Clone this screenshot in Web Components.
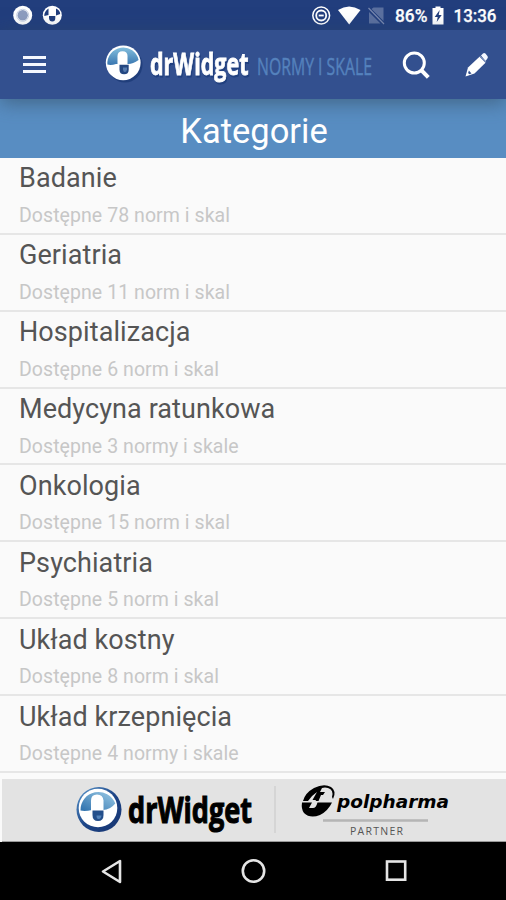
<!DOCTYPE html>
<html lang="pl"><head><meta charset="utf-8"><title>drWidget</title>
<style>html,body{margin:0;height:100%;background:#fafafa}body{font-family:Roboto,"Noto Sans",sans-serif}</style></head>
<body><norm-app></norm-app>
<script>
const define=(name,html)=>customElements.define(name,class extends HTMLElement{
 constructor(){super();this.attachShadow({mode:'open'})}
 connectedCallback(){this.shadowRoot.innerHTML=typeof html==='function'?html(this):html}
});

define('pill-logo',`<style>:host{display:block;width:46px;height:47px}svg{display:block;width:100%;height:100%;overflow:visible}</style>
<svg viewBox="0 0 46 46"><defs>
<linearGradient id="r" x1="0" y1="0" x2="1" y2="1"><stop offset="0" stop-color="#5d9bd0"/><stop offset=".5" stop-color="#1d4587"/><stop offset="1" stop-color="#17346f"/></linearGradient>
<linearGradient id="b" x1="0" y1="1" x2="1" y2="0"><stop offset="0" stop-color="#2d70ac"/><stop offset="1" stop-color="#9ccbe6"/></linearGradient></defs>
<circle cx="23" cy="23" r="22.5" fill="url(#r)"/><circle cx="22" cy="21.5" r="19.3" fill="#fff"/>
<path d="M4.5 24A18 18 0 0 1 39.3 17Q34 23.5 27 23.5H16Q9 25 4.5 24Z" fill="url(#b)"/>
<path d="M15 24.5V14Q15 8 21 8T27.5 14V24.5Z" fill="#fff"/><path d="M16.5 24H27.5V28.5Q27.5 34.5 22 34.5T16.5 28.5Z" fill="#244f8b"/><path d="M20.5 29h5q-.5 3.5-3 3.5-2 0-2-3.5" fill="#5383ba"/></svg>`);

define('status-bar',`<style>:host{display:flex;height:30px;background:#223e7d}svg{display:block}text{font:500 18px Roboto,sans-serif;fill:#fff;stroke:#fff;stroke-width:.25}</style>
<svg width="506" height="30" viewBox="0 0 506 30"><circle cx="22.7" cy="15.3" r="9.5" fill="#fff"/><circle cx="22.7" cy="15.3" r="5.2" fill="#8d9dbf"/><circle cx="22.7" cy="15.3" r="6" fill="none" stroke="#c8d2e4"/>
<circle cx="52.3" cy="15.3" r="9.5" fill="#fff"/><path d="M44.3 16q0-5 4.2-7.5V15ZM56 8.6q4 2 4.2 5.3L56 15.5ZM49 16h6.3v2q0 3.5-3 3.5T49 18Z" fill="#203d7c"/>
<g fill="none" stroke="#fff"><circle cx="321.2" cy="15.5" r="8.4" stroke-width="1.5"/><circle cx="321.2" cy="15.5" r="5" stroke-width="1.8"/><path d="M318.7 15.5h5" stroke-width="1.8"/></g>
<path d="M338 10q11-7 22.5 0L349.2 24.5Z" fill="#fff"/>
<path d="M383.5 7.5V21L371.5 9l2-1.5ZM369 12l11.5 11.5H369Z" fill="#5b709f"/><path d="M368.5 8L384 24" stroke="#7888af" stroke-width="1.2"/>
<text x="395" y="22" textLength="32.5" lengthAdjust="spacingAndGlyphs">86%</text>
<path d="M435.5 6.5h5V8h3v16.5h-11V8h3Z" fill="#fff"/><path d="M439.7 10l-5 7h3l-1 5 5-7h-3Z" fill="#223e7d"/>
<text x="453.5" y="22" textLength="43" lengthAdjust="spacingAndGlyphs">13:36</text></svg>`);

define('tool-bar',`<style>:host{display:flex;align-items:center;height:69px;background:#33508f;position:relative;z-index:1;box-shadow:0 4px 18px rgba(50,75,95,.6)}
.menu{display:grid;gap:4px;width:23px;margin-left:23px;margin-right:59px}.menu i{height:3px;background:#f5f8ff}
svg{display:block;flex:none;overflow:visible}.word{font-family:"Open Sans",sans-serif}.name{filter:drop-shadow(1.5px 2px .5px #203f7e)}</style>
<div class="menu"><i></i><i></i><i></i></div>
<svg width="36" height="40" viewBox="0 0 36 40" style="margin-right:9px"><defs><linearGradient id="g" x1="0" y1="0" x2="0" y2="1"><stop offset="0" stop-color="#83bfdd"/><stop offset="1" stop-color="#3976b0"/></linearGradient></defs><circle cx="20" cy="20" r="17.5" fill="#203e7b"/><circle cx="18.2" cy="17.8" r="17.4" fill="#fff"/><path d="M2.4 19.5A15.8 15.8 0 0 1 33.6 15Q28 19 23 19H11Q6 20.5 2.4 19.5Z" fill="url(#g)"/><path d="M12.5 20v-9q0-4.8 5-4.8t5 4.8v9Z" fill="#fff"/><path d="M14.5 19.8h9.2v5q0 4.5-4.6 4.5t-4.6-4.5Z" fill="#244781"/><path d="M18 22.5h4v2q-.5 2.5-2.1 2.5T18 24.5Z" fill="#557bae"/></svg>
<svg class="word" width="106" height="60"><text class="name" x="0" y="39.5" fill="#fff" stroke="#fff" stroke-width=".8" font-weight="700" font-size="29.5" textLength="98.5" lengthAdjust="spacingAndGlyphs">drWidget</text></svg><svg class="word" width="120" height="60" style="margin-right:26px"><text x="1" y="39.5" fill="#5582bd" stroke="#5582bd" stroke-width=".4" font-size="23" textLength="115" lengthAdjust="spacingAndGlyphs">NORMY I SKALE</text></svg>
<svg width="28" height="30" viewBox="0 0 28 30" style="margin-right:35px"><circle cx="12.3" cy="13" r="10" fill="none" stroke="#fff" stroke-width="3"/><path d="M19.5 20.3L26.3 27.3" stroke="#fff" stroke-width="4"/></svg>
<svg width="24" height="26" viewBox="0 0 24 26"><path d="M.5 24.5l2.5-9L14.5 4.7l6 6L9.5 21.5Z" fill="#fff"/><path d="M16 3.5l2-2q1.2-1 2.4.1l2 2.5q1 1.2 0 2.3L20.5 9Z" fill="#f5f8ff"/><path d="M3.9 18.5l2.6 3-2.3.7-1.1-1.1Z" fill="#33508f"/><path d="M14.8 4.2l6 6" stroke="#8296c0" stroke-width="1.2"/></svg>`);

define('page-title',`<style>:host{display:flex;height:58.6px;align-items:center;justify-content:center;background:#588dc2;color:#fff;font-size:34.5px;padding:4.5px 0 0 2px;box-sizing:border-box}</style><slot></slot>`);

define('category-row',e=>`<style>:host{display:flex;flex-direction:column;height:76.9px;box-sizing:border-box;padding:2.6px 19px 0;border-bottom:2px solid #e6e6e6;white-space:nowrap}
.t{font-size:27px;line-height:36px;color:#555;letter-spacing:.08px}.s{font-size:19.5px;line-height:24px;margin-top:7.4px;color:#c7c7c7;letter-spacing:.06px}</style><span class="t"><slot></slot></span><span class="s">${e.getAttribute('note')}</span>`);

define('partner-footer',`<style>:host{display:flex;height:62px;margin:5.7px 0 0 2px;background:#e3e3e3;border-bottom:1px solid #999;align-items:center;box-sizing:content-box}
pill-logo{margin-left:74px;margin-right:5px}.sep{width:2px;height:47px;background:#d5d5d5;margin:0 25px 0 19px}svg{display:block;flex:none;overflow:visible}</style>
<pill-logo></pill-logo><svg width="128" height="62"><text x="1" y="44" font-family="Open Sans,sans-serif" font-weight="700" font-size="36" stroke="#000" stroke-width="1.1" textLength="124" lengthAdjust="spacingAndGlyphs">drWidget</text></svg><div class="sep"></div>
<svg width="152" height="62" viewBox="-1 -2 152 62"><path d="M1 20Q3 12 12 7Q22 2 29 6Q35 10 31 18L30 16Q32 9 26 7Q23 6 20 7L14 19H10.5L15 11Q9 15 6 20Z M0 21.5H10L7 27H11Q14 27 15.5 21.5H30Q26 30 18 34Q8 38 2 32Q-1 28 0 21.5Z M18 11H23L21 14H19L16.5 20H13.5Z"/>
<text x="35" y="27" font-family="DejaVu Sans,sans-serif" font-size="18.5" font-weight="700" font-style="italic" textLength="112" lengthAdjust="spacingAndGlyphs">polpharma</text><path d="M21 39.5H126" stroke="#b5b5b5" stroke-width="2.5"/><text x="48" y="54" fill="#555" font-family="Open Sans,sans-serif" font-size="10.5" textLength="53" lengthAdjust="spacing">PARTNER</text></svg>`);

define('nav-bar',`<style>:host{display:flex;height:59px;background:#000}svg{display:block}</style><svg width="506" height="58" viewBox="0 0 506 58" fill="none" stroke="#e5e5e5" stroke-width="2.6"><path d="M120 19V40L103 29.5Z" stroke-linejoin="round"/><circle cx="253.5" cy="29" r="10.7"/><rect x="387" y="19.5" width="18.2" height="18.2"/></svg>`);

define('norm-app',`<style>:host{display:flex;flex-direction:column;width:506px;height:900px;overflow:hidden;background:#fafafa}main{height:615.7px;flex:none}main category-row:first-child{height:77.2px;padding-top:2.9px}status-bar,tool-bar,page-title,partner-footer,nav-bar{flex:none}</style>
<status-bar></status-bar><tool-bar></tool-bar><page-title>Kategorie</page-title><main>
<category-row note="Dostępne 78 norm i skal">Badanie</category-row><category-row note="Dostępne 11 norm i skal">Geriatria</category-row><category-row note="Dostępne 6 norm i skal">Hospitalizacja</category-row><category-row note="Dostępne 3 normy i skale">Medycyna ratunkowa</category-row><category-row note="Dostępne 15 norm i skal">Onkologia</category-row><category-row note="Dostępne 5 norm i skal">Psychiatria</category-row><category-row note="Dostępne 8 norm i skal">Układ kostny</category-row><category-row note="Dostępne 4 normy i skale">Układ krzepnięcia</category-row></main><partner-footer></partner-footer><nav-bar></nav-bar>`);
</script></body></html>
